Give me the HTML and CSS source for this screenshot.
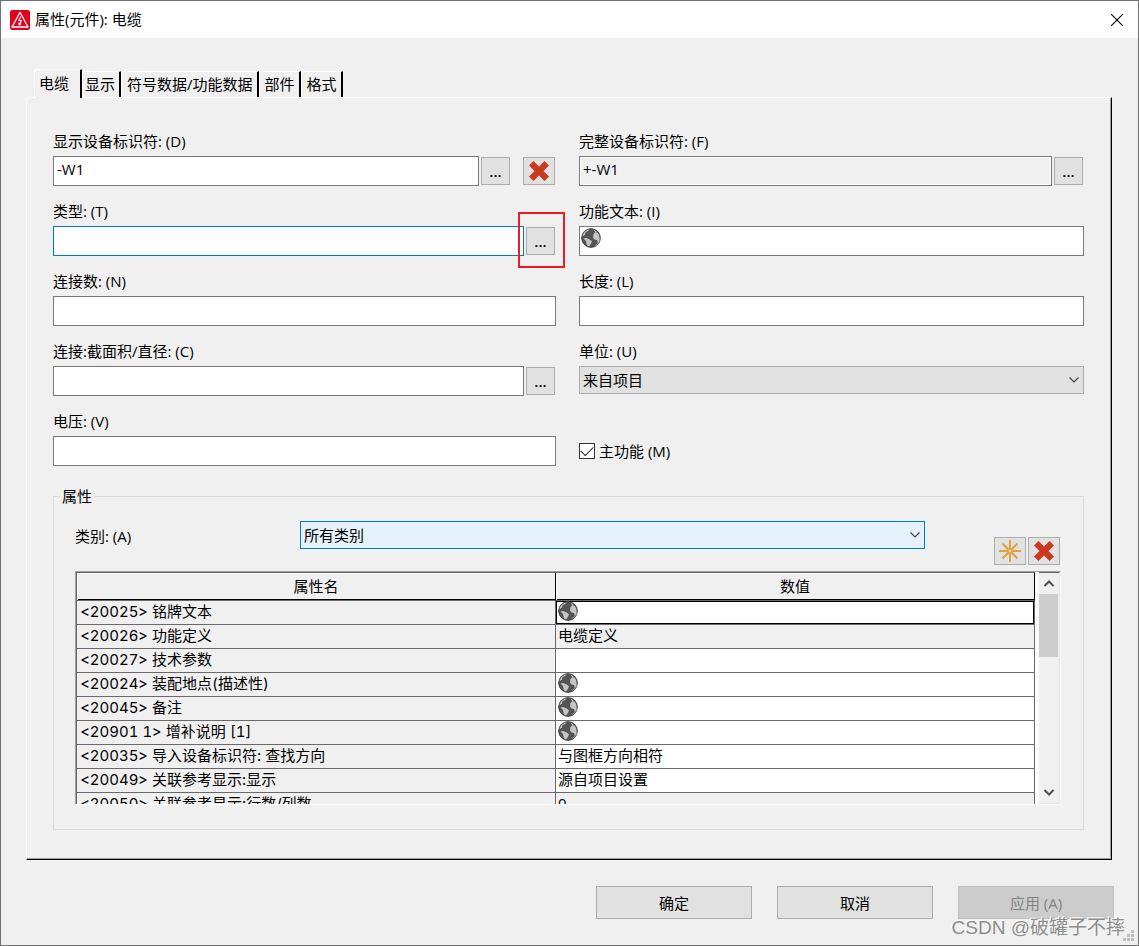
FILE: index.html
```html
<!DOCTYPE html>
<html lang="zh-CN">
<head>
<meta charset="utf-8">
<title>属性(元件): 电缆</title>
<link rel="stylesheet" href="styles.css">
</head>
<body>
<svg class="defs" aria-hidden="true">
  <symbol id="globe" viewBox="0 0 20 20">
    <circle cx="10" cy="10" r="9.500" fill="#555"/>
    <path d="M1 8.500C2 4 5 1.200 9 .8L7 3 4.500 4.200 4 6.500 2 8zM2.500 10.500l3-.5 4 2 1.500 1.500-1 2-1.500 2.500-1.500.5-1.500-2.500-.5-3zM12.500 6l2-2 2.500 1L18.800 9l-.5 4-1.500 2-.8-3-2.500-.5-1.500-2zM12.500 1.500l3 1.500-1 1.500z" fill="#c6c6c6"/>
    <circle cx="10" cy="10" r="9.300" fill="none" stroke="#444" stroke-width="1"/>
    <path d="M14.500 17.500C17 16 18.800 13.500 19 10.500" fill="none" stroke="#aaa" stroke-width="1"/>
  </symbol>
  <symbol id="cross" viewBox="0 0 20 20">
    <path d="M4.500 0L10 5.500 15.500 0 20 4.500 14.500 10 20 15.500 15.500 20 10 14.500 4.500 20 0 15.500 5.500 10 0 4.500z" fill="#c93a1f"/>
  </symbol>
  <symbol id="down" viewBox="0 0 10 6">
    <path d="M.5.5L5 5 9.500.5" fill="none" stroke="#444" stroke-width="1.200"/>
  </symbol>
</svg>
<main class="dialog">
  <header class="titlebar">
    <svg class="logo" viewBox="0 0 20 20" aria-hidden="true">
      <rect width="20" height="20" rx="2.500" fill="#e2001a"/>
      <path d="M10 2.200L18 17H2z" fill="none" stroke="#fff" stroke-width="1.300" stroke-linejoin="round"/>
      <path d="M10.800 6.500L8.800 10.500h2.600L9.500 14.500M8.700 12.700l.6 2.400 2-1.500" fill="none" stroke="#fff" stroke-width="1.100"/>
    </svg>
    <h1 class="title">属性(元件): 电缆</h1>
    <button class="close" type="button" aria-label="关闭">
      <svg viewBox="0 0 12 12" width="12" height="12"><path d="M0 0L12 12M12 0L0 12" stroke="#000" stroke-width="1.100"/></svg>
    </button>
  </header>

  <div class="body">
    <nav class="tabs" role="tablist">
      <button class="tab tab-active" role="tab" type="button" aria-selected="true">电缆</button>
      <button class="tab tab-next" role="tab" type="button">显示</button>
      <button class="tab" role="tab" type="button">符号数据/功能数据</button>
      <button class="tab" role="tab" type="button">部件</button>
      <button class="tab" role="tab" type="button">格式</button>
    </nav>

    <section class="panel">
      <div class="form">
        <div class="field">
          <label for="dt">显示设备标识符: (D)</label>
          <div class="line line-inset">
            <input class="input" id="dt" type="text" value="-W1">
            <button class="btn-more" type="button" aria-label="浏览">...</button>
            <button class="btn-icon btn-clear" type="button" aria-label="删除"><svg width="20" height="20"><use href="#cross"/></svg></button>
          </div>
        </div>
        <div class="field">
          <label for="fulldt">完整设备标识符: (F)</label>
          <div class="line line-inset">
            <input class="input input-readonly" id="fulldt" type="text" value="+-W1" readonly>
            <button class="btn-more" type="button" aria-label="浏览">...</button>
          </div>
        </div>

        <div class="field">
          <label for="type">类型: (T)</label>
          <div class="line line-inset">
            <input class="input input-focus" id="type" type="text">
            <div class="marked"><button class="btn-more" type="button" aria-label="浏览">...</button></div>
          </div>
        </div>
        <div class="field">
          <label for="text">功能文本: (I)</label>
          <div class="line with-globe">
            <input class="input" id="text" type="text">
            <svg class="globe globe-over" aria-hidden="true"><use href="#globe"/></svg>
          </div>
        </div>

        <div class="field">
          <label for="count">连接数: (N)</label>
          <div class="line"><input class="input" id="count" type="text"></div>
        </div>
        <div class="field">
          <label for="length">长度: (L)</label>
          <div class="line"><input class="input" id="length" type="text"></div>
        </div>

        <div class="field">
          <label for="section">连接:截面积/直径: (C)</label>
          <div class="line line-inset">
            <input class="input" id="section" type="text">
            <button class="btn-more" type="button" aria-label="浏览">...</button>
          </div>
        </div>
        <div class="field">
          <label for="unit">单位: (U)</label>
          <div class="select">
            <select id="unit"><option>来自项目</option></select>
            <svg class="chevron" aria-hidden="true"><use href="#down"/></svg>
          </div>
        </div>

        <div class="field">
          <label for="voltage">电压: (V)</label>
          <div class="line"><input class="input" id="voltage" type="text"></div>
        </div>
        <div class="field field-check">
          <label class="check"><input type="checkbox" checked>主功能 (M)</label>
        </div>
      </div>

      <fieldset class="group">
        <legend>属性</legend>
        <div class="bar">
          <label class="bar-label" for="category">类别: (A)</label>
          <div class="select select-hot">
            <select id="category"><option>所有类别</option></select>
            <svg class="chevron" aria-hidden="true"><use href="#down"/></svg>
          </div>
          <div class="tools">
            <button class="btn-icon" type="button" aria-label="新建">
              <svg width="22" height="22" viewBox="0 0 22 22"><path d="M11 0v9M11 13v9M0 11h9M13 11h9M3.500 3.500l6 6M12.500 12.500l6 6M18.500 3.500l-6 6M9.500 12.500l-6 6" stroke="#e0a23f" stroke-width="2"/><circle cx="11" cy="11" r="2" fill="#f6e6c8" stroke="#e0a23f" stroke-width="1.400"/></svg>
            </button>
            <button class="btn-icon" type="button" aria-label="删除"><svg width="20" height="20"><use href="#cross"/></svg></button>
          </div>
        </div>

        <div class="grid-frame">
          <div class="grid-view">
            <table class="grid">
              <thead><tr><th>属性名</th><th>数值</th></tr></thead>
              <tbody>
                <tr><td>&lt;20025&gt; 铭牌文本</td><td class="edit current"><svg class="globe" aria-hidden="true"><use href="#globe"/></svg></td></tr>
                <tr><td>&lt;20026&gt; 功能定义</td><td>电缆定义</td></tr>
                <tr><td>&lt;20027&gt; 技术参数</td><td class="edit"></td></tr>
                <tr><td>&lt;20024&gt; 装配地点(描述性)</td><td class="edit"><svg class="globe" aria-hidden="true"><use href="#globe"/></svg></td></tr>
                <tr><td>&lt;20045&gt; 备注</td><td class="edit"><svg class="globe" aria-hidden="true"><use href="#globe"/></svg></td></tr>
                <tr><td>&lt;20901 1&gt; 增补说明 [1]</td><td class="edit"><svg class="globe" aria-hidden="true"><use href="#globe"/></svg></td></tr>
                <tr><td>&lt;20035&gt; 导入设备标识符: 查找方向</td><td class="edit">与图框方向相符</td></tr>
                <tr><td>&lt;20049&gt; 关联参考显示:显示</td><td class="edit">源自项目设置</td></tr>
                <tr><td>&lt;20050&gt; 关联参考显示:行数/列数</td><td>0</td></tr>
              </tbody>
            </table>
          </div>
          <div class="scrollbar">
            <button class="arrow" type="button" aria-label="向上"><svg width="10" height="7" viewBox="0 0 10 7"><path d="M.5 6L5 1.500 9.500 6" fill="none" stroke="#505050" stroke-width="2"/></svg></button>
            <div class="track"><div class="thumb"></div></div>
            <button class="arrow" type="button" aria-label="向下"><svg width="10" height="7" viewBox="0 0 10 7"><path d="M.5 1L5 5.500 9.500 1" fill="none" stroke="#505050" stroke-width="2"/></svg></button>
          </div>
        </div>
      </fieldset>
    </section>
  </div>

  <footer class="actions">
    <button class="btn" type="button">确定</button>
    <button class="btn" type="button">取消</button>
    <button class="btn" type="button" disabled>应用 (A)</button>
  </footer>
  <span class="watermark">CSDN @破罐子不摔</span>
  <svg class="grip" viewBox="0 0 11 11" aria-hidden="true"><path d="M8 0h3v3H8zM4 4h3v3H4zM8 4h3v3H8zM0 8h3v3H0zM4 8h3v3H4zM8 8h3v3H8z" fill="#bfbfbf"/></svg>
</main>
</body>
</html>
```

FILE: styles.css
```css
* { box-sizing: border-box; }

body {
  margin: 0;
  background: #f0f0f0;
  color: #000;
  font: 15px/20px "Open Sans", "Noto Sans CJK SC", sans-serif;
}

button, input, select {
  margin: 0;
  font: inherit;
  color: inherit;
  border-radius: 0;
}

svg { display: block; }
.defs { position: absolute; width: 0; height: 0; }

.dialog {
  position: relative;
  min-height: 100vh;
  border: 1px solid #707070;
  background: #f0f0f0;
}

.titlebar {
  display: flex;
  align-items: center;
  height: 37px;
  padding: 0 15px 0 9px;
  background: #fff;
}
.logo { width: 20px; height: 20px; }
.title { flex: 1; margin: 0 0 0 5px; padding-bottom: 2px; font-size: 15px; font-weight: 400; }
.close { padding: 0; border: 0; background: none; }

.body { padding: 31px 26px 0 25px; }

.tabs { display: flex; align-items: flex-end; padding-left: 8px; }
.tab {
  height: 26px;
  padding: 0 4px 1px 5px;
  border: solid;
  border-width: 1px 2px 0 1px;
  border-color: #fff #000 #fff #fff;
  border-radius: 3px 1px 0 0;
  background: #f0f0f0;
  white-space: nowrap;
}
.tab-next { padding-left: 2px; }
.tab-active {
  position: relative;
  height: 29px;
  padding: 0 11px 2px 4px;
  margin-bottom: -1px;
}

.panel {
  padding: 31px 27px 29px 26px;
  border: 1px solid;
  border-color: #fff #000 #000 #fff;
  box-shadow: inset -1px -1px #a0a0a0;
}

.form { display: grid; grid-template-columns: 503fr 505fr; column-gap: 23px; }
.field { height: 70px; }
.field > label { display: block; height: 27px; line-height: 25px; }
.line { display: flex; align-items: center; height: 30px; }
.line-inset { padding-right: 1px; }

.input {
  flex: 1;
  min-width: 0;
  height: 30px;
  padding: 0 3px 4px;
  border: 1px solid #7a7a7a;
  background: #fff;
  outline: none;
}
.input-readonly { background: #f0f0f0; box-shadow: inset 0 0 0 1px #fff; }
.input-focus { border-color: #0078d7; }

.btn-more, .btn-icon, .btn {
  border: 1px solid #adadad;
  background: #e1e1e1;
}
.btn-more { width: 29px; height: 28px; margin-left: 2px; padding: 0; font-weight: 600; }
.btn-icon {
  display: flex;
  align-items: center;
  justify-content: center;
  width: 32px;
  height: 28px;
  padding: 0;
}
.btn-clear { margin-left: 13px; }

.marked { position: relative; }
.marked::after {
  content: "";
  position: absolute;
  inset: -15px -10px -13px -6px;
  border: 2px solid #ed1c24;
  pointer-events: none;
}

.with-globe { position: relative; }
.globe { width: 20px; height: 20px; }
.globe-over { position: absolute; left: 2px; top: 2px; }

.select { position: relative; }
.select select {
  display: block;
  width: 100%;
  height: 28px;
  padding: 0 3px;
  border: 1px solid #adadad;
  background: #e1e1e1;
  appearance: none;
}
.select-hot select { border-color: #0078d7; background: #e5f1fb; }
.chevron { position: absolute; right: 5px; top: 11px; width: 10px; height: 6px; pointer-events: none; }

.field-check { display: flex; align-items: center; padding-top: 14px; }
.field > .check { display: flex; align-items: center; gap: 4px; }
.check input {
  display: grid;
  place-items: center;
  width: 16px;
  height: 16px;
  border: 1px solid #333;
  background: #fff;
  appearance: none;
}
.check input:checked::before {
  content: "";
  width: 11px;
  height: 6px;
  margin-bottom: 4px;
  border: solid #333;
  border-width: 0 0 1px 1px;
  transform: rotate(-45deg);
}

.group {
  min-width: 0;
  margin: 7px 0 0;
  padding: 14px 22px 24px 21px;
  border: 1px solid #dcdcdc;
}
.group legend { margin-left: -15px; padding: 0 2px; line-height: 21px; }

.bar { display: flex; align-items: flex-start; padding-right: 1px; }
.bar-label { width: 225px; line-height: 30px; }
.bar .select { flex: 1; }
.tools { display: flex; gap: 2px; margin: 16px 0 0 69px; }

.grid-frame {
  display: flex;
  height: 234px;
  margin-top: 6px;
  border: 1px solid;
  border-color: #a0a0a0 #fff #fff #a0a0a0;
  background: #fff;
}
.grid-view {
  flex: 1;
  min-width: 0;
  overflow: hidden;
  border: solid #696969;
  border-width: 1px 0 0 1px;
}
.grid {
  width: 100%;
  table-layout: fixed;
  border-collapse: separate;
  border-spacing: 0;
  background: #f0f0f0;
}
.grid th {
  height: 28px;
  padding: 0 0 1px;
  border-right: 1px solid #000;
  border-bottom: 1px solid #696969;
  box-shadow: inset 1px 1px #fff, inset 0 -1px #000;
  font-weight: 400;
}
.grid td {
  height: 24px;
  padding: 0 2px 3px;
  border: solid #696969;
  border-width: 0 1px 1px 0;
  line-height: 20px;
  white-space: nowrap;
}
.grid td:first-child {
  padding: 0 2px 2px 3px;
  font-family: Inter, "Noto Sans CJK SC", sans-serif;
  font-variant-numeric: tabular-nums;
}
.grid .edit { background: #fff; }
.grid .current { box-shadow: inset 0 0 0 1px #000; }

.scrollbar {
  display: flex;
  flex-direction: column;
  width: 21px;
  margin-left: 4px;
  border: solid #e3e3e3;
  border-width: 1px 1px 1px 0;
  border-top-color: #696969;
  background: #f0f0f0;
}
.arrow {
  display: grid;
  place-items: center;
  height: 21px;
  padding: 0;
  border: 0;
  background: #f0f0f0;
}
.track { flex: 1; }
.thumb { height: 63px; margin-right: 1px; background: #cdcdcd; }

.actions {
  display: flex;
  justify-content: flex-end;
  gap: 25px;
  padding: 26px 24px 26px;
}
.btn { width: 156px; height: 33px; padding: 0; }
.btn:disabled { border-color: #bfbfbf; background: #ccc; color: #838383; }

.watermark {
  position: absolute;
  right: 13px;
  bottom: 4px;
  color: #8c8c8c;
  font: 19px/26px "Liberation Sans", "Noto Sans CJK SC", sans-serif;
  text-shadow: -1px -1px #fff;
}
.grip { position: absolute; right: 4px; bottom: 4px; width: 11px; height: 11px; }
```
